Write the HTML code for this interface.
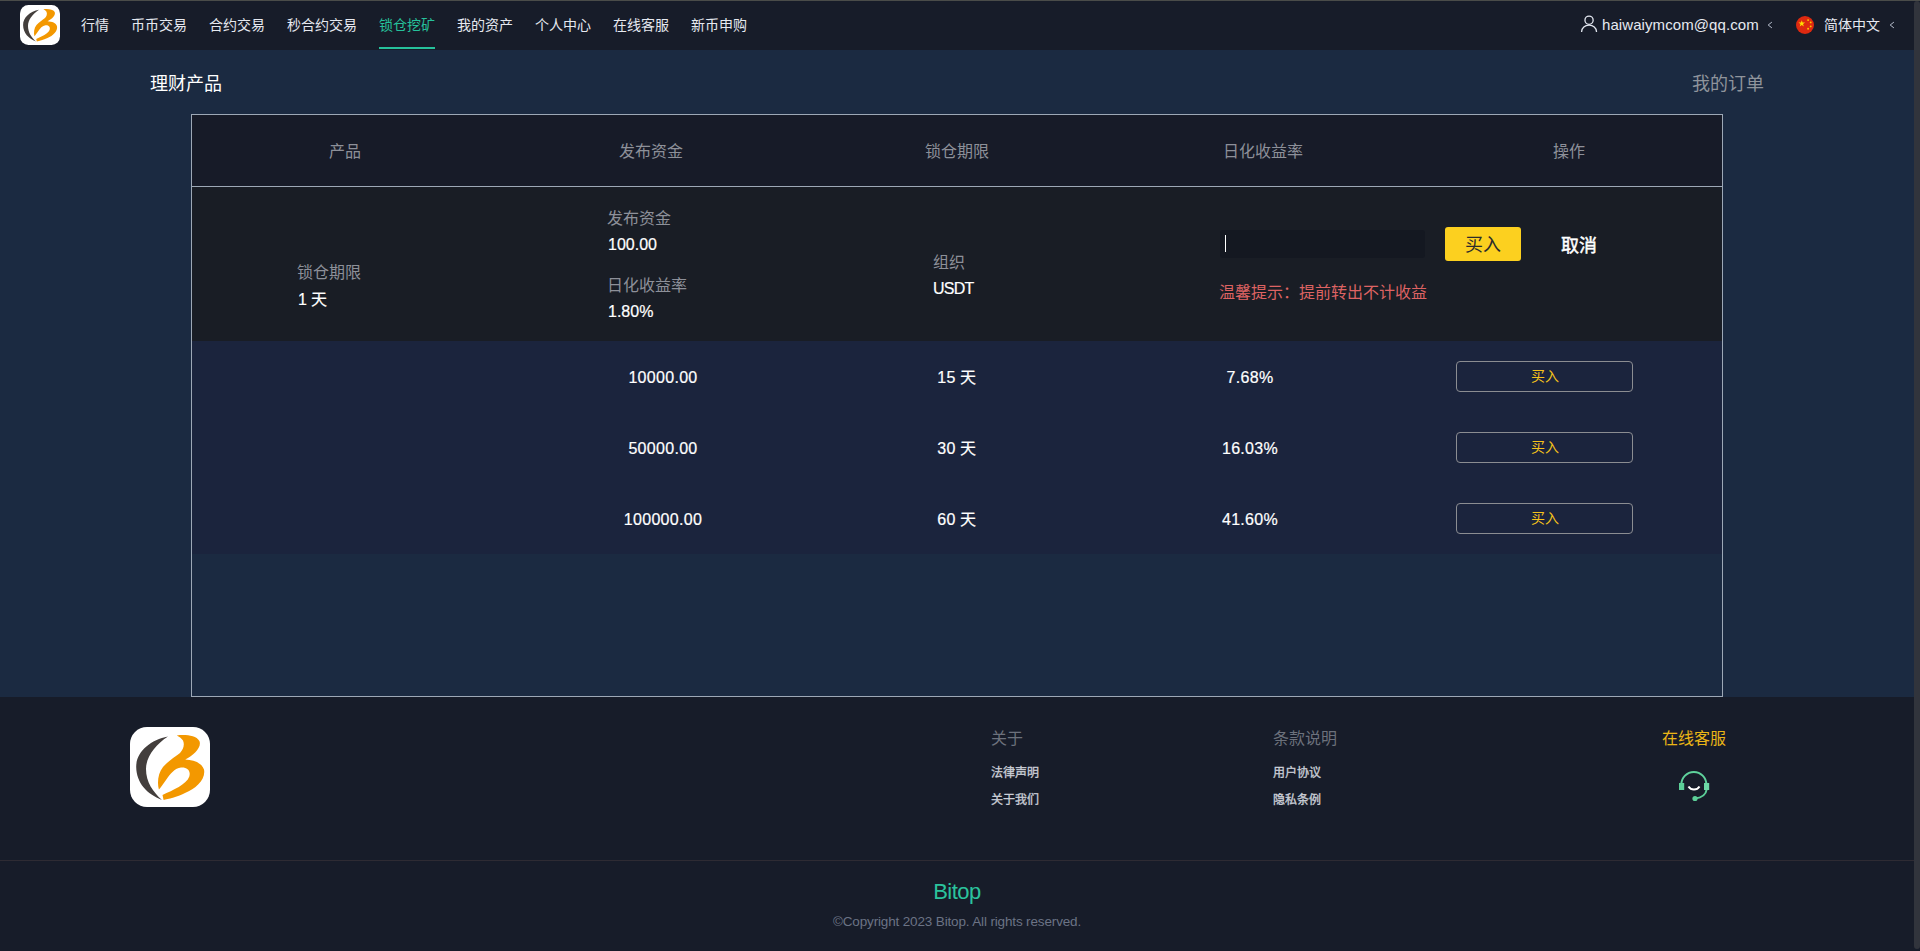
<!DOCTYPE html>
<html lang="zh-CN">
<head>
<meta charset="utf-8">
<title>Bitop</title>
<style>
*{margin:0;padding:0;box-sizing:border-box;}
html,body{width:1920px;height:951px;overflow:hidden;background:#1b2a41;}
body{position:relative;font-family:"Liberation Sans",sans-serif;color:#fff;}
.a{position:absolute;white-space:nowrap;}
#top{position:absolute;left:0;top:0;width:1920px;height:50px;background:#171c29;}
#topline{position:absolute;left:0;top:0;width:1920px;height:1px;background:#4a4c49;}
.nav{position:absolute;top:16px;font-size:14px;line-height:18px;color:#e6e9f0;}
#uline{position:absolute;left:379px;top:47px;width:56px;height:2px;background:#26c19b;}
#main{position:absolute;left:0;top:50px;width:1920px;height:647px;background:#1b2a41;}
#tbl{position:absolute;left:191px;top:114px;width:1532px;height:583px;border:1px solid #9da8b6;}
#thead{position:absolute;left:192px;top:115px;width:1530px;height:71px;background:#171b28;}
#thline{position:absolute;left:192px;top:186px;width:1530px;height:1px;background:#9da8b6;}
#exp{position:absolute;left:192px;top:187px;width:1530px;height:154px;background:#191d25;}
#rows{position:absolute;left:192px;top:341px;width:1530px;height:213px;background:#1b243d;}
.th{position:absolute;top:142px;font-size:16px;line-height:20px;color:#8d9099;width:306px;text-align:center;}
.lbl{color:#8d9099;font-size:16px;line-height:20px;}
.val{color:#fff;font-size:16px;line-height:20px;-webkit-text-stroke:0.2px #fff;}
.num{position:absolute;font-size:16px;line-height:20px;color:#fff;text-align:center;width:200px;letter-spacing:0.3px;-webkit-text-stroke:0.2px #fff;}
.obtn{position:absolute;left:1456px;width:177px;height:31px;border:1px solid #8b8d92;border-radius:4px;color:#f5c21b;font-size:14px;line-height:29px;text-align:center;}
#foot{position:absolute;left:0;top:697px;width:1920px;height:254px;background:#171c29;}
#fline{position:absolute;left:0;top:860px;width:1920px;height:1px;background:#2e2b33;}
#sb{position:absolute;left:1914px;top:1px;width:6px;height:948px;background:#31343c;border-radius:3px;}
</style>
</head>
<body>
<div id="main"></div>
<div id="top"></div>
<div id="topline"></div>

<!-- header logo -->
<div class="a" style="left:20px;top:5px;width:40px;height:40px;">
<svg width="40" height="40" viewBox="0 0 80 80">
<rect x="0" y="0" width="80" height="80" rx="17" fill="#fff"/>
<path d="M38 9.5 C20 13 6 25 6.2 40 C6.4 56 17 67 32 73 C23 65 16 55 16 42 C16 30 25 18 38 9.5 Z" fill="#433e3c"/>
<path d="M46.8 8.4 C55 7.5 66 8 69.4 14 C72 20 64 28 55.2 32.6 C64 33 72 36 74 42.6 C76 52 66 62 55 66 C47 70 38 72 33.6 73 L32.5 68 C43 63 56.5 57.5 59.3 49.5 C61 43.5 57 40 51 40.5 C45 41 40 47 36 53 C33 57 30.5 61 28.9 62.6 C27 56 28 46 33 40 C38 34 45 30 50 26 C53 23 55 18 53 13.5 C51.5 11 49 9.5 46.8 8.4 Z" fill="#f39800"/>
</svg>
</div>

<div class="nav" style="left:81px;">行情</div>
<div class="nav" style="left:131px;">币币交易</div>
<div class="nav" style="left:209px;">合约交易</div>
<div class="nav" style="left:287px;">秒合约交易</div>
<div class="nav" style="left:379px;color:#26c19b;">锁仓挖矿</div>
<div class="nav" style="left:457px;">我的资产</div>
<div class="nav" style="left:535px;">个人中心</div>
<div class="nav" style="left:613px;">在线客服</div>
<div class="nav" style="left:691px;">新币申购</div>
<div id="uline"></div>

<!-- right header -->
<svg class="a" style="left:1577px;top:12px;" width="24" height="24" viewBox="0 0 24 24">
<circle cx="12.05" cy="8.2" r="4.1" fill="none" stroke="#e3e7f0" stroke-width="1.3"/>
<path d="M4.6 20 L4.6 19.8 C4.6 15.6 8 13.2 12.05 13.2 C16.1 13.2 19.5 15.6 19.5 19.8 L19.5 20" fill="none" stroke="#e3e7f0" stroke-width="1.3"/>
</svg>
<div class="a" style="left:1602px;top:16px;font-size:15px;line-height:18px;color:#e6e9f0;letter-spacing:0.08px;">haiwaiymcom@qq.com</div>
<svg class="a" style="left:1767px;top:21px;" width="6" height="8" viewBox="0 0 6 8"><path d="M4.9 1.1 L1.2 4 L4.9 6.9" fill="none" stroke="#b9c0cf" stroke-width="1"/></svg>
<svg class="a" style="left:1796px;top:16px;" width="18" height="18" viewBox="0 0 18 18">
<circle cx="9" cy="9" r="9" fill="#de2910"/>
<polygon points="5.75,4.20 6.54,6.62 9.08,6.62 7.02,8.11 7.81,10.53 5.75,9.04 3.69,10.53 4.48,8.11 2.42,6.62 4.96,6.62" fill="#ffe000"/>
<circle cx="12.1" cy="4.1" r="0.95" fill="#ffc800"/>
<circle cx="14.7" cy="6.4" r="0.95" fill="#ffc800"/>
<circle cx="14.7" cy="10.4" r="0.95" fill="#ffc800"/>
<circle cx="12.1" cy="12.7" r="0.95" fill="#ffc800"/>
</svg>
<div class="a" style="left:1824px;top:16px;font-size:14px;line-height:18px;color:#e6e9f0;">简体中文</div>
<svg class="a" style="left:1889px;top:21px;" width="6" height="8" viewBox="0 0 6 8"><path d="M4.9 1.1 L1.2 4 L4.9 6.9" fill="none" stroke="#b9c0cf" stroke-width="1"/></svg>

<!-- title row -->
<div class="a" style="left:150px;top:73px;font-size:18px;line-height:22px;color:#fff;">理财产品</div>
<div class="a" style="left:1692px;top:73px;font-size:18px;line-height:22px;color:#8f949c;">我的订单</div>

<!-- table -->
<div id="tbl"></div>
<div id="thead"></div>
<div id="thline"></div>
<div id="exp"></div>
<div id="rows"></div>

<div class="th" style="left:192px;">产品</div>
<div class="th" style="left:498px;">发布资金</div>
<div class="th" style="left:804px;">锁仓期限</div>
<div class="th" style="left:1110px;">日化收益率</div>
<div class="th" style="left:1416px;">操作</div>

<!-- expanded row -->
<div class="a lbl" style="left:297px;top:263px;">锁仓期限</div>
<div class="a val" style="left:298px;top:290px;">1 天</div>

<div class="a lbl" style="left:607px;top:209px;">发布资金</div>
<div class="a val" style="left:608px;top:235px;">100.00</div>
<div class="a lbl" style="left:607px;top:276px;">日化收益率</div>
<div class="a val" style="left:608px;top:302px;">1.80%</div>

<div class="a lbl" style="left:933px;top:253px;">组织</div>
<div class="a val" style="left:933px;top:279px;letter-spacing:-0.8px;">USDT</div>

<div class="a" style="left:1220px;top:230px;width:205px;height:28px;background:#141821;border-radius:3px;"></div>
<div class="a" style="left:1225px;top:235px;width:1px;height:17px;background:#fff;"></div>
<div class="a" style="left:1445px;top:227px;width:76px;height:34px;background:#fcd01f;border-radius:3px;color:#2b2b2b;font-size:18px;line-height:36px;text-align:center;">买入</div>
<div class="a" style="left:1561px;top:235px;font-size:18px;line-height:22px;color:#fff;-webkit-text-stroke:0.45px #fff;">取消</div>
<div class="a" style="left:1219px;top:283px;font-size:16px;line-height:20px;color:#de6363;">温馨提示：提前转出不计收益</div>

<!-- data rows -->
<div class="num" style="left:563px;top:368px;">10000.00</div>
<div class="num" style="left:857px;top:368px;">15 天</div>
<div class="num" style="left:1150px;top:368px;">7.68%</div>
<div class="obtn" style="top:361px;">买入</div>

<div class="num" style="left:563px;top:439px;">50000.00</div>
<div class="num" style="left:857px;top:439px;">30 天</div>
<div class="num" style="left:1150px;top:439px;">16.03%</div>
<div class="obtn" style="top:432px;">买入</div>

<div class="num" style="left:563px;top:510px;">100000.00</div>
<div class="num" style="left:857px;top:510px;">60 天</div>
<div class="num" style="left:1150px;top:510px;">41.60%</div>
<div class="obtn" style="top:503px;">买入</div>

<!-- footer -->
<div id="foot"></div>
<div id="fline"></div>
<div class="a" style="left:130px;top:727px;width:80px;height:80px;">
<svg width="80" height="80" viewBox="0 0 80 80">
<rect x="0" y="0" width="80" height="80" rx="17" fill="#fff"/>
<path d="M38 9.5 C20 13 6 25 6.2 40 C6.4 56 17 67 32 73 C23 65 16 55 16 42 C16 30 25 18 38 9.5 Z" fill="#433e3c"/>
<path d="M46.8 8.4 C55 7.5 66 8 69.4 14 C72 20 64 28 55.2 32.6 C64 33 72 36 74 42.6 C76 52 66 62 55 66 C47 70 38 72 33.6 73 L32.5 68 C43 63 56.5 57.5 59.3 49.5 C61 43.5 57 40 51 40.5 C45 41 40 47 36 53 C33 57 30.5 61 28.9 62.6 C27 56 28 46 33 40 C38 34 45 30 50 26 C53 23 55 18 53 13.5 C51.5 11 49 9.5 46.8 8.4 Z" fill="#f39800"/>
</svg>
</div>

<div class="a" style="left:991px;top:729px;font-size:16px;line-height:20px;color:#6c717c;">关于</div>
<div class="a" style="left:991px;top:765px;font-size:12px;line-height:16px;color:#c9cdd6;-webkit-text-stroke:0.35px #c9cdd6;">法律声明</div>
<div class="a" style="left:991px;top:792px;font-size:12px;line-height:16px;color:#c9cdd6;-webkit-text-stroke:0.35px #c9cdd6;">关于我们</div>

<div class="a" style="left:1273px;top:729px;font-size:16px;line-height:20px;color:#6c717c;">条款说明</div>
<div class="a" style="left:1273px;top:765px;font-size:12px;line-height:16px;color:#c9cdd6;-webkit-text-stroke:0.35px #c9cdd6;">用户协议</div>
<div class="a" style="left:1273px;top:792px;font-size:12px;line-height:16px;color:#c9cdd6;-webkit-text-stroke:0.35px #c9cdd6;">隐私条例</div>

<div class="a" style="left:1662px;top:729px;font-size:16px;line-height:20px;color:#ebb616;">在线客服</div>
<svg class="a" style="left:1674px;top:766px;" width="40" height="40" viewBox="0 0 40 40">
<path d="M7.35 18.5 A12.5 12.5 0 0 1 32.35 18.5" fill="none" stroke="#5fd29c" stroke-width="2"/>
<rect x="5" y="17" width="5.2" height="7" fill="#5ccf98"/>
<rect x="30" y="17" width="5.2" height="7" fill="#6dd8a6"/>
<path d="M14.5 20.5 A6.5 6.5 0 0 0 25.5 20.5" fill="none" stroke="#fff" stroke-width="2"/>
<path d="M32.5 24 C32 28 28 31.5 21 32.5" fill="none" stroke="#5ccf98" stroke-width="2"/>
<circle cx="21" cy="32.5" r="2.6" fill="#5ccf98"/>
</svg>

<div class="a" style="left:0;top:879px;width:1914px;text-align:center;font-size:22px;line-height:25px;letter-spacing:-0.5px;color:#2bc39d;">Bitop</div>
<div class="a" style="left:0;top:914px;width:1914px;text-align:center;font-size:13.5px;line-height:16px;letter-spacing:-0.15px;color:#6b7385;">©Copyright 2023 Bitop. All rights reserved.</div>

<div id="sb"></div>
</body>
</html>
